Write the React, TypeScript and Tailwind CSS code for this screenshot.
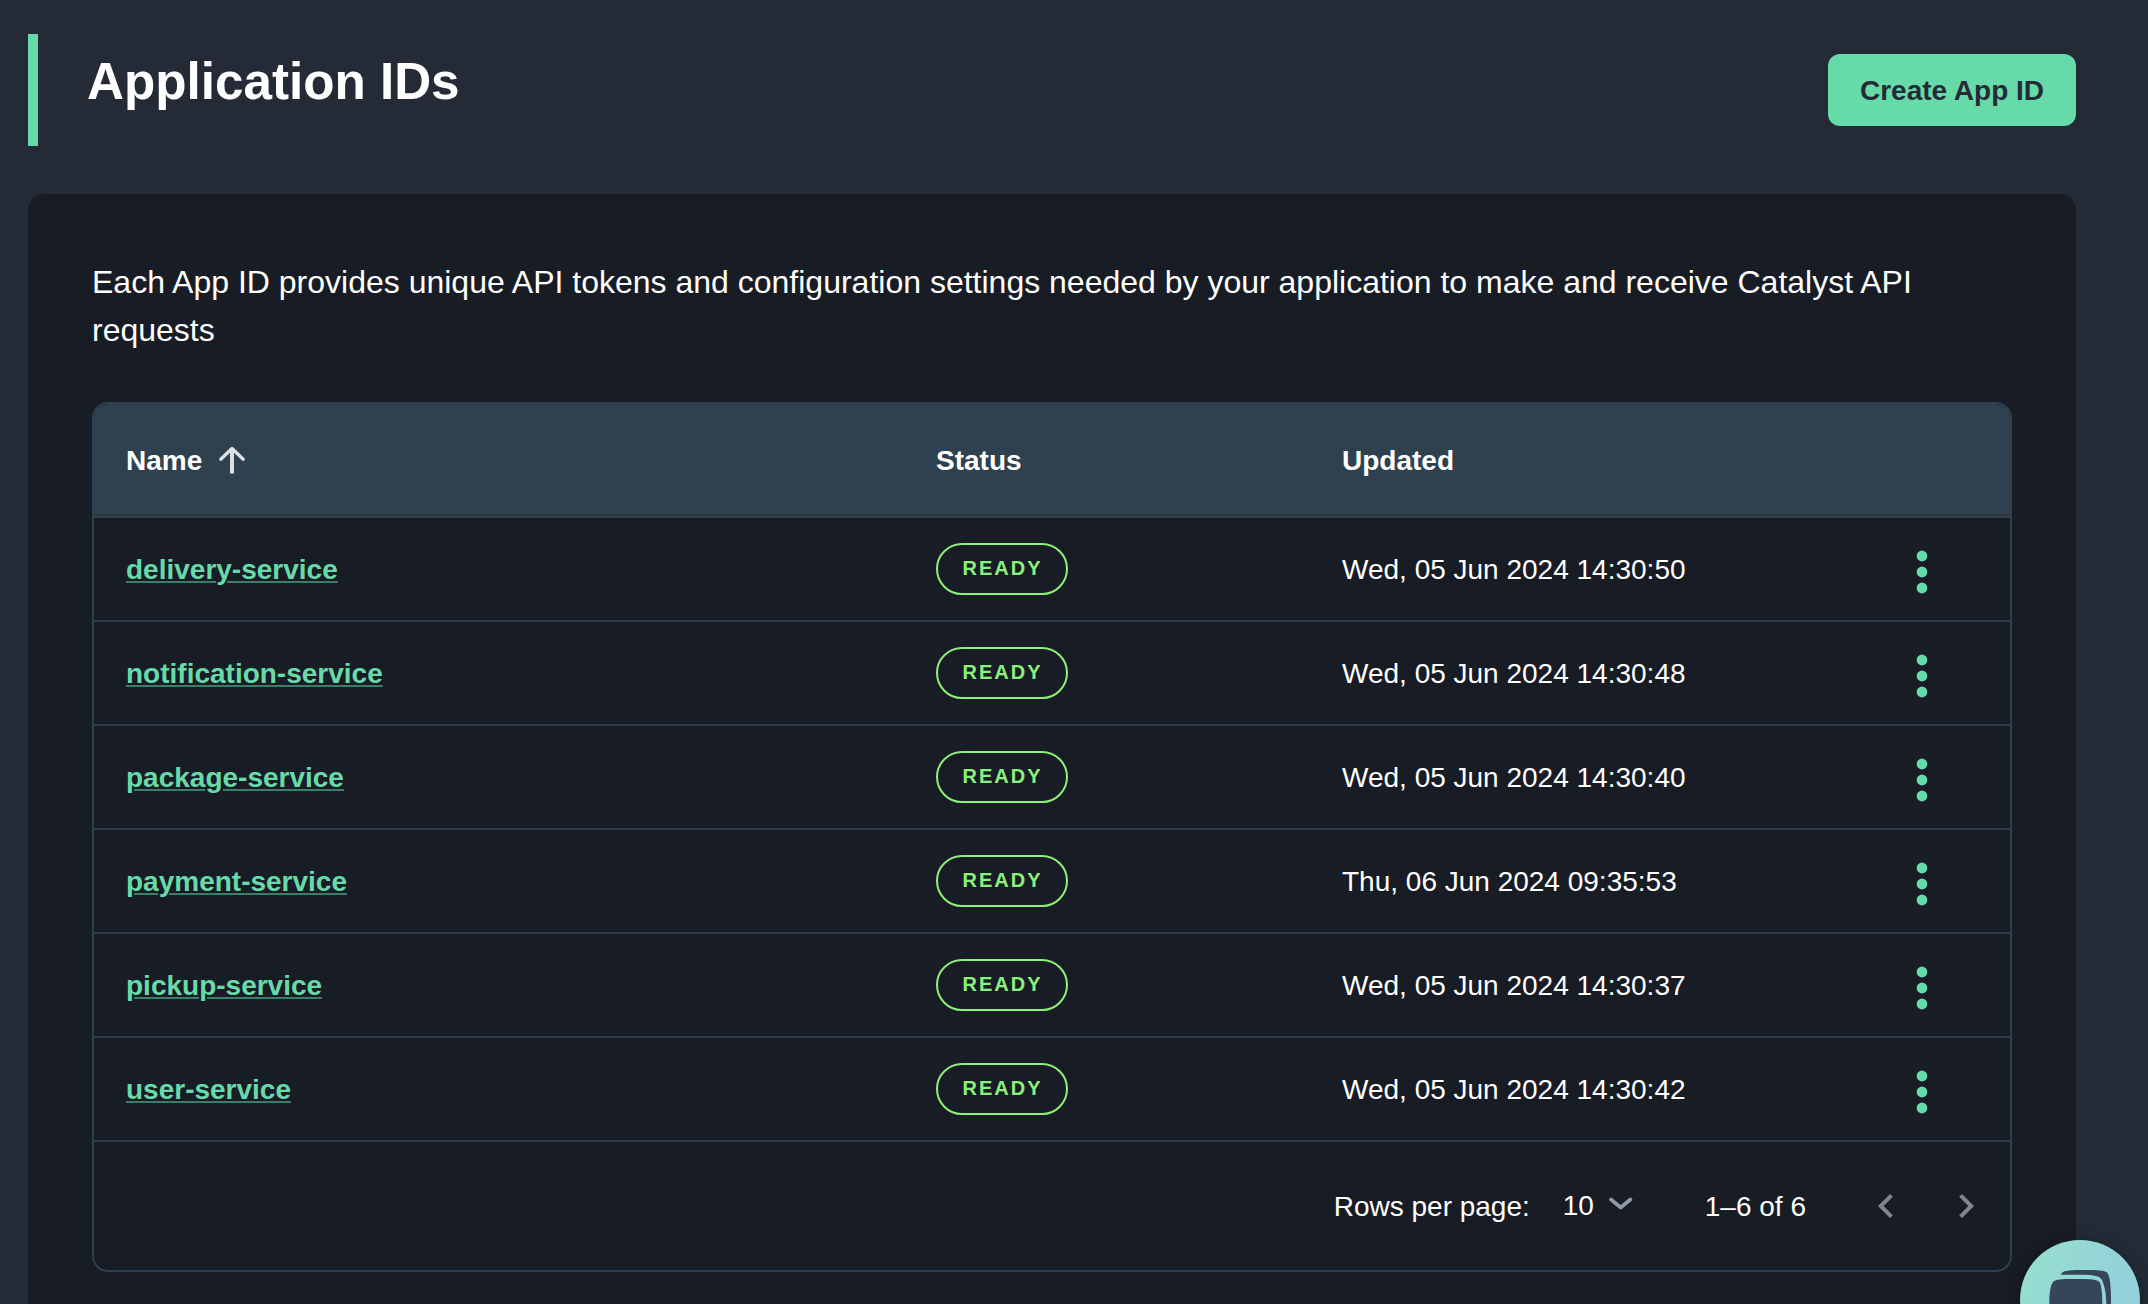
import React from "react";

const rows = [
  { name: "delivery-service", updated: "Wed, 05 Jun 2024 14:30:50" },
  { name: "notification-service", updated: "Wed, 05 Jun 2024 14:30:48" },
  { name: "package-service", updated: "Wed, 05 Jun 2024 14:30:40" },
  { name: "payment-service", updated: "Thu, 06 Jun 2024 09:35:53" },
  { name: "pickup-service", updated: "Wed, 05 Jun 2024 14:30:37" },
  { name: "user-service", updated: "Wed, 05 Jun 2024 14:30:42" },
];

function SortArrow() {
  return (
    <svg className="ml-3.5 size-8 text-[#dcdfe4]" viewBox="0 0 32 32" fill="none" stroke="currentColor" strokeWidth="4">
      <path d="M16 28.500V4" />
      <path d="M4.800 14.200 16 3.600l11.200 10.600" strokeWidth="3.4" strokeLinecap="round" strokeLinejoin="round" />
    </svg>
  );
}

function Kebab() {
  return (
    <svg className="size-12" viewBox="0 0 48 48" fill="#66dba9">
      <circle cx="24" cy="8" r="5.4" />
      <circle cx="24" cy="24" r="5.4" />
      <circle cx="24" cy="40" r="5.4" />
    </svg>
  );
}

function ChatBubble() {
  return (
    <button className="fixed top-[1240px] left-[2020px] size-[120px] rounded-full bg-linear-[110deg] from-[#97dfcd] to-[#91cdde] shadow-[0_2px_16px_rgba(0,0,0,0.3)]">
      <svg className="size-full" viewBox="0 0 120 120" fill="#374559">
        <path d="M41 34.700C41.500 31 47 30 64 30C78 30 84 30.500 87 32.500C90 35 91 47 91 60C91 70 90 77 88 82L86 80C87 64 86.500 50 82 40C80 36 74 34.700 60 34.700Z" />
        <path d="M33 42C35 39.500 40 39 56 39C72 39 77 39.500 79.500 42C81.500 45 82.300 54 82.300 62C82.300 70 81.500 77 79.500 81C77 84 73 85 70 85V96L54 85C40 85 35 84.500 33 81C30.500 77 29.300 70 29.300 62C29.300 54 30.500 45 33 42Z" />
      </svg>
    </button>
  );
}

const grid = "grid grid-cols-[810px_406px_518px_1fr] items-center";

export default function App() {
  return (
    <div className="h-[1304px] w-[2148px] overflow-hidden bg-[#242b36] pr-[72px] pl-7 font-['Liberation_Sans',Arial,sans-serif] text-[28px] text-white">
      <header className="flex h-[194px] items-start justify-between pt-[34px]">
        <div className="h-28 border-l-[10px] border-[#66dba9] pl-[49px]">
          <h1 className="pt-[18px] text-[51.2px] leading-[60px] font-bold">Application IDs</h1>
        </div>
        <button className="mt-5 h-[72px] w-[248px] rounded-xl bg-[#66dba9] pt-px font-bold text-[#242b36]">Create App ID</button>
      </header>

      <main className="h-[1200px] rounded-2xl bg-[#181c24] px-16 pt-16">
        <p className="h-36 w-[1860px] text-[32px] leading-[48px]">
          Each App ID provides unique API tokens and configuration settings needed by your application to make and receive Catalyst API requests
        </p>

        <section className="h-[870px] overflow-hidden rounded-2xl border-2 border-[#2e4050]">
          <div className={`${grid} h-28 rounded-t-[14px] border-b-2 border-[#31363b] bg-[#2f414f] pt-[3px] pl-8 font-bold`}>
            <div className="flex items-center">Name<SortArrow /></div>
            <div>Status</div>
            <div>Updated</div>
          </div>
          <div className="border-t-2 border-[#2e4050]">
            {rows.map((row) => (
              <div key={row.name} className={`${grid} h-[104px] border-b-2 border-[#2e4050] pl-8`}>
                <div className="pt-0.5">
                  <a className="font-bold text-[#66dba9] underline decoration-[#66dba9]/50 decoration-2 underline-offset-2">{row.name}</a>
                </div>
                <div className="flex h-[52px] w-[132px] items-center rounded-full border-2 border-[#8cf07c] pl-[24.5px] text-[20px] leading-[46px] font-bold tracking-[2px] text-[#8cf07c]">
                  <span className="-mt-0.5">READY</span>
                </div>
                <div className="pt-0.5">{row.updated}</div>
                <div className="pt-1.5 pl-[38px]"><Kebab /></div>
              </div>
            ))}
          </div>
          <footer className="flex h-32 items-center justify-end pr-5">
            <span className="mr-[33px] pt-0.5">Rows per page:</span>
            <span className="w-11">10</span>
            <svg className="mr-[70px] mb-1 h-6 w-7" viewBox="0 0 28 24" fill="none" stroke="#8d99a8" strokeWidth="3.8" strokeLinecap="round" strokeLinejoin="round">
              <path d="m4 7.500 9.700 8 9.700-8" />
            </svg>
            <span className="mr-14 pt-0.5">1–6 of 6</span>
            <svg className="mr-8 size-12" viewBox="0 0 24 24" fill="#7f8592">
              <path d="M15.410 16.590 10.830 12l4.580-4.590L14 6l-6 6 6 6z" />
            </svg>
            <svg className="size-12" viewBox="0 0 24 24" fill="#7f8592">
              <path d="M8.590 16.590 13.170 12 8.590 7.410 10 6l6 6-6 6z" />
            </svg>
          </footer>
        </section>
      </main>
      <ChatBubble />
    </div>
  );
}
